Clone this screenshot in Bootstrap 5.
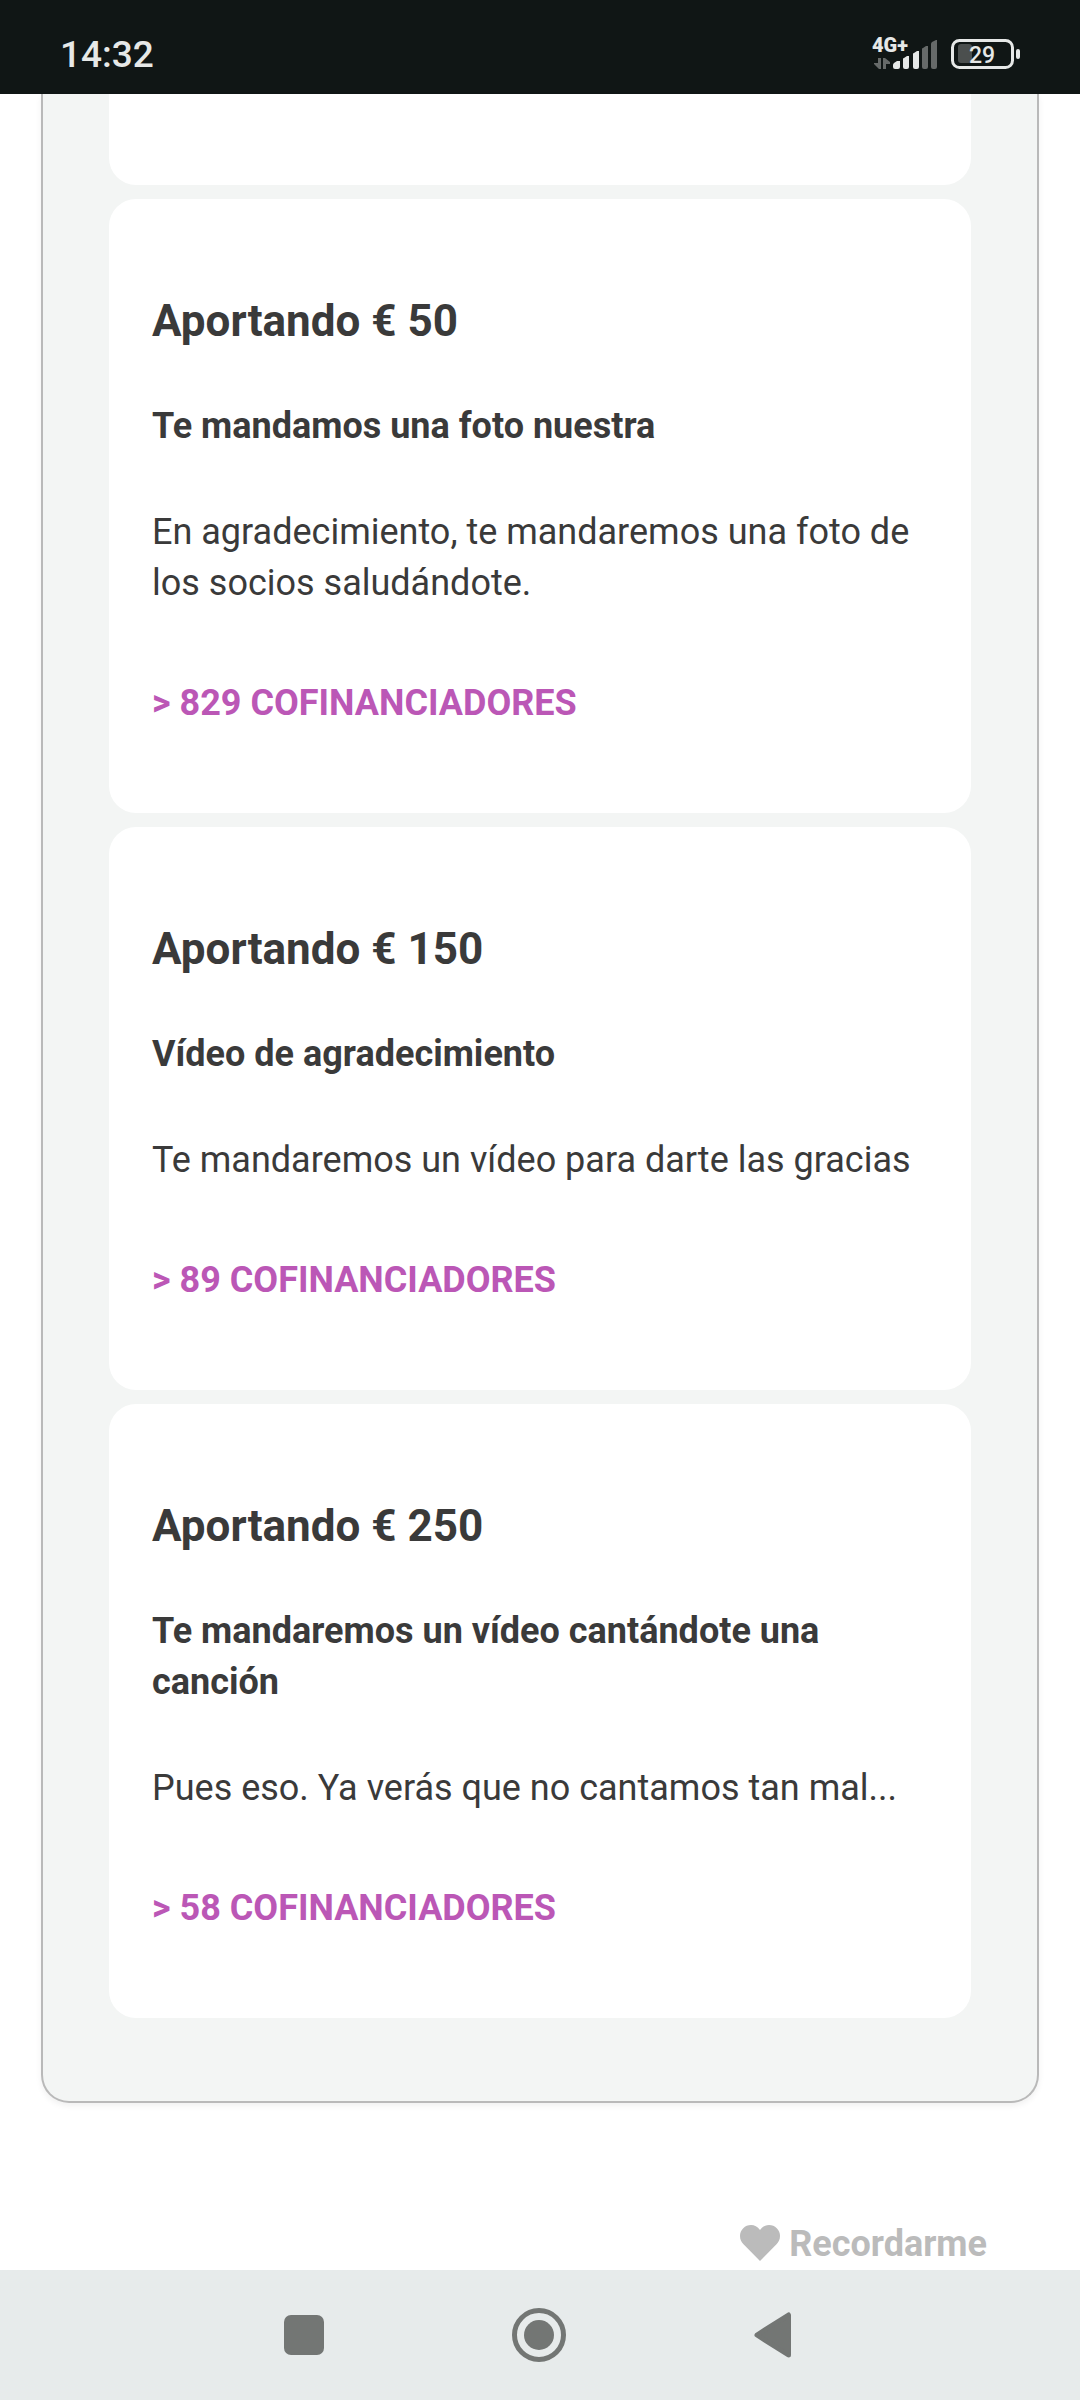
<!DOCTYPE html>
<html lang="es">
<head>
<meta charset="utf-8">
<meta name="viewport" content="width=device-width, initial-scale=1">
<title>Recompensas</title>
<link href="https://cdn.jsdelivr.net/npm/bootstrap@5.3.0/dist/css/bootstrap.min.css" rel="stylesheet">
<style>
  body { font-family: Roboto, "Liberation Sans", sans-serif; font-size: 36px; line-height: 51px; color: #3a3a3a; background: #fff; }
  .status-bar { height: 94px; padding: 16px 60px 0; background: #101615; color: #e6e8e7; }
  .status-time { font-size: 37px; line-height: 45px; font-weight: 500; }
  .rewards-panel { margin: 0 41px; padding: 0 66px 83px; background: #f3f5f4; border: 2px solid #b9b9b9; border-top: 0; border-radius: 0 0 28px 28px; box-shadow: 0 3px 6px rgba(0,0,0,.06); }
  .rewards-list { gap: 14px; }
  .reward { background: #fff; border: 0; border-radius: 27px; padding: 90px 43px 84px; color: inherit; }
  .reward-prev { height: 91px; padding: 0; border-radius: 0 0 27px 27px; }
  .reward-amount { font-size: 44px; line-height: 64px; font-weight: 700; margin: 0 0 48px; }
  .reward-title { font-size: 36px; line-height: 51px; font-weight: 700; margin: 0 0 55px; }
  .reward-text { margin: 0 0 69px; }
  .backers { color: #bb57b6; }
  .remember { padding: 0 93px; margin-top: 116px; }
  .remember-btn { gap: 9px; font: inherit; font-weight: 700; line-height: 51px; color: #bbb; }
  .remember-btn svg { margin-bottom: 3px; }
  .system-nav { height: 130px; padding-right: 4px; background: #e7ebeb; }
  .system-nav-inner { width: 508px; max-width: 100%; }
</style>
</head>
<body class="d-flex flex-column min-vh-100">
<header class="status-bar d-flex justify-content-between align-items-start flex-shrink-0">
  <time class="status-time pt-3" datetime="14:32">14:32</time>
  <svg class="mt-3" width="148" height="40" viewBox="872 32 148 40" fill="#e6e8e7" role="img" aria-label="4G+, batería 29">
    <text x="872" y="52" font-size="20" font-weight="900" font-family="Roboto, sans-serif">4G+</text>
    <g fill="#666a69">
      <path d="M878 58h3v11h-2l-5-5v-1h4z"/>
      <path d="M883 58h2l5 4v2h-4v5h-3z"/>
      <path d="M922 49q0-1 1-1l3-2h2v21q0 2-2 2h-2q-2 0-2-2zM931 44q0-1 1-2l4-2h1v27q0 2-2 2h-2q-2 0-2-2z"/>
    </g>
    <path d="M893 65q0-1 1-2l3-2h3v6q0 2-2 2h-3q-2 0-2-2zM903 59q0-1 1-1l3-2h2v11q0 2-2 2h-2q-2 0-2-2zM913 54q0-1 1-1l3-2h2v16q0 2-2 2h-2q-2 0-2-2z"/>
    <rect x="958" y="44" width="14" height="19" rx="3" fill="#4b4f4e"/>
    <rect x="952.5" y="40.500" width="60" height="27" rx="7" fill="none" stroke="#e6e8e7" stroke-width="3"/>
    <rect x="1016" y="49" width="4" height="10" rx="2"/>
    <text x="969" y="63" font-size="23" font-weight="500" font-family="Roboto, sans-serif">29</text>
  </svg>
</header>

<main class="flex-grow-1">
  <section class="rewards-panel">
    <div class="rewards-list d-flex flex-column">
      <div class="card reward reward-prev"></div>
      <article class="card reward">
        <h2 class="reward-amount">Aportando € 50</h2>
        <h3 class="reward-title">Te mandamos una foto nuestra</h3>
        <p class="reward-text">En agradecimiento, te mandaremos una foto de los socios saludándote.</p>
        <a class="backers fw-bold text-decoration-none text-uppercase" href="#">&gt; 829 cofinanciadores</a>
      </article>
      <article class="card reward">
        <h2 class="reward-amount">Aportando € 150</h2>
        <h3 class="reward-title">Vídeo de agradecimiento</h3>
        <p class="reward-text">Te mandaremos un vídeo para darte las gracias</p>
        <a class="backers fw-bold text-decoration-none text-uppercase" href="#">&gt; 89 cofinanciadores</a>
      </article>
      <article class="card reward">
        <h2 class="reward-amount">Aportando € 250</h2>
        <h3 class="reward-title">Te mandaremos un vídeo cantándote una canción</h3>
        <p class="reward-text">Pues eso. Ya verás que no cantamos tan mal...</p>
        <a class="backers fw-bold text-decoration-none text-uppercase" href="#">&gt; 58 cofinanciadores</a>
      </article>
    </div>
  </section>
  <div class="remember d-flex justify-content-end">
    <button type="button" class="remember-btn btn border-0 p-0 d-flex align-items-center">
      <svg width="40" height="36" viewBox="0 0 40 36" fill="currentColor" aria-hidden="true"><path d="M20 5C17.500 1.500 14.500 0 11 0A11 11 0 0 0 0 11C0 14.500 1.300 17 3.500 19.200L20 36L36.500 19.200C38.700 17 40 14.500 40 11A11 11 0 0 0 29 0C25.500 0 22.500 1.500 20 5Z"/></svg>
      Recordarme
    </button>
  </div>
</main>

<nav class="system-nav d-flex justify-content-center flex-shrink-0" aria-label="Sistema">
  <div class="system-nav-inner d-flex justify-content-between align-items-center">
    <button type="button" class="btn border-0 p-0 d-flex" aria-label="Recientes">
      <svg width="40" height="40" fill="#737674"><rect width="40" height="40" rx="7"/></svg>
    </button>
    <button type="button" class="btn border-0 p-0 d-flex" aria-label="Inicio">
      <svg width="54" height="54" fill="#737674"><circle cx="27" cy="27" r="24.500" fill="none" stroke="#737674" stroke-width="5"/><circle cx="27" cy="27" r="15"/></svg>
    </button>
    <button type="button" class="btn border-0 p-0 d-flex" aria-label="Atrás">
      <svg width="38" height="46" fill="#737674" stroke="#737674" stroke-width="5" stroke-linejoin="round"><path d="M3 23L34.500 3V43Z"/></svg>
    </button>
  </div>
</nav>
<script src="https://cdn.jsdelivr.net/npm/bootstrap@5.3.0/dist/js/bootstrap.bundle.min.js"></script>
</body>
</html>
